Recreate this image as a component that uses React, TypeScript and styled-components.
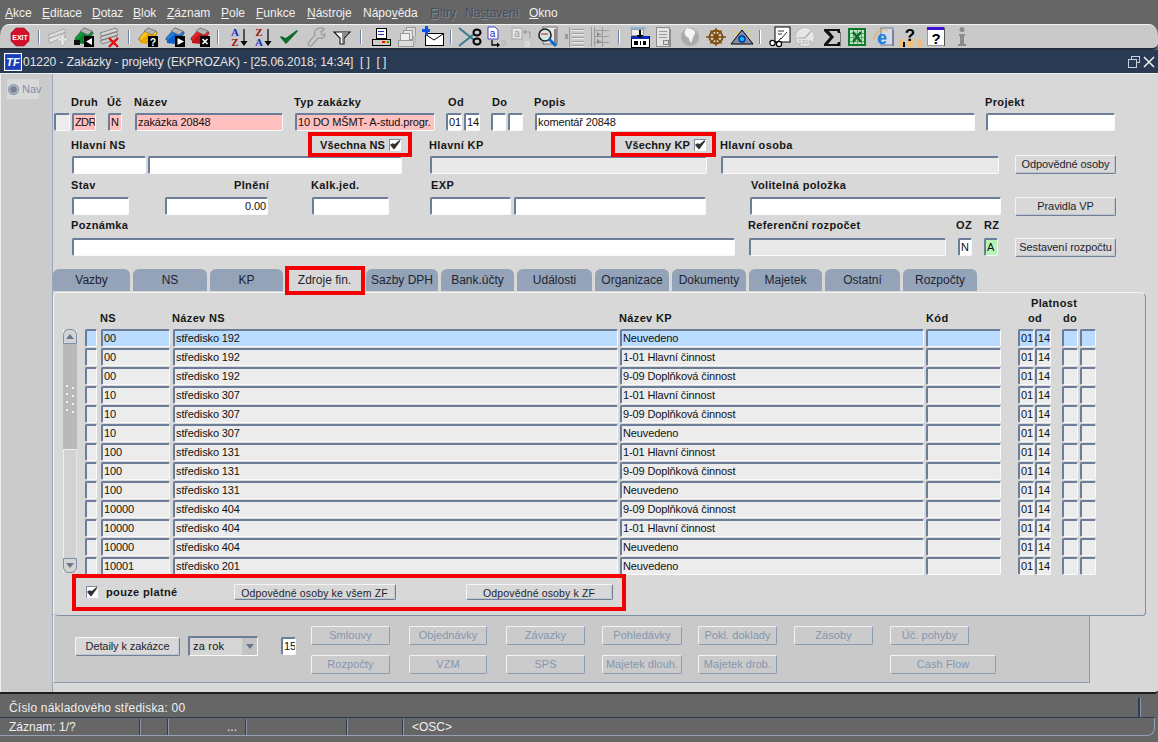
import React from "react";
import styled, { createGlobalStyle } from "styled-components";

const Global = createGlobalStyle`
  html, body { margin: 0; padding: 0; background: #666; }
  * { box-sizing: border-box; }
  body { font-family: "Liberation Sans", Arial, sans-serif; }
`;

const Shell = styled.div`
  width: 1158px; height: 742px; display: flex; flex-direction: column; overflow: hidden;
  background: #666; font-size: 11px; color: #111;
`;

const MenuBar = styled.div`
  height: 24px; display: flex; align-items: center; padding: 1px 0 0 5px; background: #666;
  font-size: 12px; color: #eee;
`;
const MenuItem = styled.span<{ $w: number; $off?: boolean }>`
  width: ${(p) => p.$w}px; white-space: nowrap; flex: none;
  color: ${(p) => (p.$off ? "#3f4e62" : "#f0f0f0")};
  text-shadow: ${(p) => (p.$off ? "1px 1px 0 #8b8b8b" : "none")};
`;

const ToolBar = styled.div`
  height: 26px; display: flex; align-items: center; background: #c9c9c9; position: relative;
  border-top: 1px solid #f2f2f2; border-bottom: 2px solid #222c3d;
  border-radius: 9px 9px 6px 0 / 12px 12px 6px 0; padding-top: 1px;
`;
const ToolSlot = styled.div<{ $ml: number; $w: number }>`
  margin-left: ${(p) => p.$ml}px; width: ${(p) => p.$w}px; height: 22px; flex: none;
  display: flex; align-items: center; justify-content: center;
  svg { display: block; }
`;
const ToolSep = styled.i`
  display: block; width: 2px; height: 14px; background: #6d84a8; border-right: 1px solid #fff;
`;

const TitleBar = styled.div`
  height: 23px; display: flex; align-items: center; background: #2a3a52; color: #e4e4e4;
  font-size: 12px; padding: 0 3px 0 4px; letter-spacing: -0.03px;
`;
const Logo = styled.div`
  width: 18px; height: 18px; flex: none; border: 2px solid #fff; outline: 1px solid #2f4fd0; outline-offset: -2px;
  background: #1c3fb8; color: #fff; font: italic bold 11px/14px "Liberation Sans", sans-serif;
  text-align: center; margin-right: 1px;
`;
const TitleText = styled.span` flex: 1; white-space: pre; `;
const WinIcons = styled.div` display: flex; gap: 3px; align-items: center; `;

const Workspace = styled.div`
  height: 621px; display: flex; background: #d8d8d8; border-bottom: 2px solid #1d1d1d;
  border-top: 1px solid #ededed; border-bottom-right-radius: 4px;
`;
const NavStrip = styled.div`
  width: 53px; flex: none; background: #cbcbcb; padding: 5px 0 0 6px;
  border-left: 1px solid #eee; border-right: 1px solid #9aa8bc;
`;
const NavTab = styled.div`
  width: 32px; height: 20px; background: #d9d9d9; display: flex; align-items: center; gap: 4px; padding-left: 2px;
  color: #7f90a8; font-size: 11px;
`;
const NavRadio = styled.i`
  display: block; width: 9px; height: 9px; flex: none; border-radius: 50%; background: #76828f; border: 1px solid #c3c9d2;
  box-shadow: 0 0 0 1px #8a97a8;
`;

const Main = styled.div` width: 1105px; flex: none; padding-top: 21px; display: flex; flex-direction: column; `;

const LabelRow = styled.div<{ $mt: number }>`
  display: flex; height: 14px; align-items: center; margin-top: ${(p) => p.$mt}px; padding-left: 18px;
`;
const Label = styled.div<{ $w?: number }>`
  ${(p) => (p.$w ? `width: ${p.$w}px; flex: none;` : "")}
  font-weight: bold; font-size: 11px; letter-spacing: 0.36px; color: #161616; white-space: nowrap; line-height: 14px;
`;
const CheckLabel = styled(Label)` letter-spacing: 0.14px; `;
const CheckCell = styled.div<{ $w: number }>`
  width: ${(p) => p.$w}px; flex: none; position: relative; display: flex; align-items: center; gap: 4px;
`;
const RedMark = styled.div`
  position: absolute; border: 4px solid #f50000; pointer-events: none; z-index: 3;
`;
const RedNS = styled(RedMark)` left: -12px; top: -6px; width: 104px; height: 25px; `;
const RedKP = styled(RedMark)` left: -14px; top: -6px; width: 105px; height: 25px; `;
const RedTab = styled(RedMark)` left: -1px; top: -4px; width: 80px; height: 29px; `;
const RedBar = styled(RedMark)` left: 18px; top: -10px; width: 554px; height: 37px; `;

const Check = styled.span`
  width: 12px; height: 12px; flex: none; display: flex; background: #fff;
  border-top: 1px solid #7d8ca3; border-left: 1px solid #7d8ca3;
  svg { display: block; }
`;
const BarCheck = styled(Check)` margin-top: 2px; `;

const FieldRow = styled.div<{ $mt: number }>`
  display: flex; align-items: flex-start; margin-top: ${(p) => p.$mt}px;
`;
const Field = styled.div<{ $w: number; $ml: number; $bg?: string; $right?: boolean; $tight?: boolean }>`
  width: ${(p) => p.$w}px; margin-left: ${(p) => p.$ml}px; height: 18px; flex: none;
  background: ${(p) => p.$bg || "#fff"}; overflow: hidden; white-space: nowrap;
  border-style: solid; border-width: 2px 1px 1px 2px; border-color: #6c7d99 #fafafa #fafafa #6c7d99;
  border-radius: 2px; font-size: 11px; letter-spacing: ${(p) => (p.$tight ? "-0.6px" : "-0.12px")};
  line-height: 15px; padding: 0 1px; color: #111;
  text-align: ${(p) => (p.$right ? "right" : "left")};
`;
const Btn = styled.div<{ $w: number; $ml: number }>`
  width: ${(p) => p.$w}px; margin-left: ${(p) => p.$ml}px; height: 19px; flex: none;
  background: #d8d8d8; color: #1c2430; font-size: 11px; text-align: center; overflow: hidden; white-space: nowrap;
  line-height: 17px; border-radius: 2px; border: 1px solid; letter-spacing: -0.1px;
  border-color: #f4f4f4 #6f7f98 #6f7f98 #f4f4f4; box-shadow: inset -1px -1px 0 #c0c6cf;
`;
const OffsetBtn = styled(Btn)` margin-top: -1px; `;
const ClippedBtn = styled(Btn)`
  height: 16px; font-size: 10.5px; letter-spacing: 0.14px; line-height: 17px;
`;
const OffBtn = styled.div<{ $w: number; $ml: number }>`
  width: ${(p) => p.$w}px; margin-left: ${(p) => p.$ml}px; height: 19px; flex: none; background: #cbcbcb;
  color: #8596af; font-size: 11px; letter-spacing: 0.05px; text-align: center; line-height: 17px; white-space: nowrap; overflow: hidden;
  border: 1px solid; border-color: #f2f2f2 #8b9bb3 #8b9bb3 #f2f2f2; border-radius: 2px;
`;

const Tabs = styled.div` display: flex; gap: 3px; margin-top: 12px; height: 23px; position: relative; z-index: 2; `;
const Tab = styled.div<{ $w: number; $on?: boolean }>`
  width: ${(p) => p.$w}px; flex: none; height: ${(p) => (p.$on ? 25 : 22)}px; position: relative;
  background: ${(p) => (p.$on ? "#d8d8d8" : "#94a3b8")}; border-radius: 6px 6px 0 0;
  color: #1d2531; font-size: 12px; text-align: center; line-height: 21px; white-space: nowrap;
  border-top: 1px solid ${(p) => (p.$on ? "#f2f2f2" : "#94a3b8")};
`;

const Panel = styled.div`
  width: 1093px; height: 324px; flex: none; background: #d8d8d8; padding-top: 3px; position: relative;
  border: 1px solid; border-color: #f4f4f4 #7f8fa8 #7f8fa8 #f4f4f4; border-radius: 5px 6px 4px 5px;
`;
const PlatnostRow = styled.div` display: flex; height: 14px; padding-left: 977px; align-items: center; `;
const HeadRow = styled.div` display: flex; height: 15px; align-items: center; padding-left: 46px; margin-bottom: 4px; `;
const TableBody = styled.div` display: flex; align-items: flex-start; `;
const Scroll = styled.div`
  width: 14px; height: 244px; margin-left: 9px; flex: none; background: #cfcfcf; display: flex; flex-direction: column;
  border-left: 1px solid #f0f0f0; border-right: 1px solid #e6e6e6;
`;
const ScrollBtn = styled.div<{ $down?: boolean }>`
  height: 15px; flex: none; background: #d4d4d4; display: flex; align-items: center; justify-content: center;
  border: 1px solid #8090a8; margin: 0 -1px;
  border-radius: ${(p) => (p.$down ? "0 0 6px 6px" : "6px 6px 0 0")};
  &::after {
    content: ""; width: 0; height: 0; border-left: 4px solid transparent; border-right: 4px solid transparent;
    ${(p) => (p.$down ? "border-top: 5px solid #66778f;" : "border-bottom: 5px solid #66778f;")}
  }
`;
const Thumb = styled.div`
  height: 106px; flex: none; background: #b9b9b9; margin: 0 -1px; display: flex; align-items: center; justify-content: center;
  padding-top: 2px; border-bottom: 1px solid #f0f0f0;
`;
const Dots = styled.div`
  width: 9px; display: grid; grid-template-columns: 2px 2px; column-gap: 4px; row-gap: 6px;
  i { display: block; height: 2px; background: #eee; }
  i:nth-child(even) { transform: translate(0, 2px); }
`;
const ScrollRest = styled.div` flex: 1; background: #d2d2d2; `;
const Rows = styled.div` margin-left: 8px; display: flex; flex-direction: column; gap: 1px; `;
const Row = styled.div` display: flex; height: 18px; `;
const Cell = styled(Field)`
  background: ${(p) => p.$bg || "#ececec"};
`;

const BottomBar = styled.div`
  position: relative; display: flex; align-items: flex-start; margin-top: 9px; height: 16px; padding-left: 32px;
`;
const OnlyLabel = styled(Label)` margin-left: 8px; margin-top: 1px; line-height: 14px; `;

const Lower = styled.div`
  width: 1037px; height: 67px; flex: none; background: #c9c9c9; display: flex; align-items: flex-start; padding-top: 10px;
  border-left: 1px solid #f0f0f0; border-right: 1px solid #8b9bb3; border-bottom: 1px solid #8b9bb3;
`;
const LowerLeft = styled.div` display: flex; align-items: flex-start; margin-top: 11px; flex: none; `;
const SelectBox = styled.div`
  margin-left: 8px; width: 70px; height: 20px; flex: none; display: flex; background: #d6d6d6; font-size: 11px;
  border-style: solid; border-width: 2px 1px 1px 2px; border-color: #6c7d99 #fafafa #fafafa #6c7d99; margin-top: -1px;
`;
const SelectText = styled.span` flex: 1; padding-left: 3px; line-height: 16px; letter-spacing: .2px; `;
const SelectArrow = styled.span`
  width: 15px; background: #c4c4c4; display: flex; align-items: center; justify-content: center;
  &::after { content: ""; border-left: 4px solid transparent; border-right: 4px solid transparent; border-top: 5px solid #66778f; }
`;
const OffGrid = styled.div` display: flex; flex-direction: column; gap: 10px; margin-left: 15px; `;
const OffRow = styled.div` display: flex; `;

const Footer = styled.div`
  flex: 1; background: #666; color: #efefef; font-size: 12px; position: relative; padding-top: 2px;
`;
const FootTop = styled.div`
  height: 22px; display: flex; align-items: center; padding: 3px 0 0 9px; margin-right: 3px; position: relative;
  border-bottom: 1px solid #2f3d52; letter-spacing: 0.2px;
  &::after { content: ""; position: absolute; right: 14px; top: 2px; bottom: 0; width: 2px; background: #2f3d52; border-right: 1px solid #8b97a8; }
`;
const FootBottom = styled.div`
  height: 18px; display: flex; align-items: center; margin-right: 3px; border-bottom: 1px solid #96a2b2;
  border-right: 1px solid #96a2b2; border-bottom-right-radius: 8px;
`;
const FootCell = styled.div<{ $w: number; $pad?: number; $right?: boolean }>`
  width: ${(p) => p.$w}px; height: 16px; flex: none; line-height: 16px; padding-left: ${(p) => p.$pad ?? 0}px;
  border-right: 1px solid #2f3d52; box-shadow: 1px 0 0 #8b97a8; white-space: nowrap;
  text-align: ${(p) => (p.$right ? "right" : "left")}; padding-right: ${(p) => (p.$right ? 8 : 0)}px;
`;
const FootLast = styled.div` padding-left: 9px; `;

/* ---------- icons ---------- */
const Svg: React.FC<{ children: React.ReactNode; w?: number; h?: number }> = ({ children, w = 22, h = 22 }) => (
  <svg width={w} height={h} viewBox={`0 0 ${w} ${h}`} shapeRendering="crispEdges">{children}</svg>
);
const Smooth: React.FC<{ children: React.ReactNode; w?: number; h?: number }> = ({ children, w = 22, h = 22 }) => (
  <svg width={w} height={h} viewBox={`0 0 ${w} ${h}`}>{children}</svg>
);

const Exit = () => (
  <Smooth w={20} h={20}>
    <polygon points="6,1 14,1 19,6 19,14 14,19 6,19 1,14 1,6" fill="#d3112a" stroke="#8e1020" strokeWidth=".6" />
    <text x="10" y="12.5" textAnchor="middle" fontSize="7" fontWeight="bold" fill="#fff" fontFamily="Liberation Sans">EXIT</text>
  </Smooth>
);
const Pile: React.FC<{ c: string; c2: string }> = ({ c, c2 }) => (
  <g>
    <polygon points="2,12 11,2 20,6 20,8 12,16 2,14" fill={c} stroke="#333" strokeWidth=".5" />
    <polygon points="3,15 12,7 18,9 11,18 3,17" fill={c2} />
    <polygon points="7,5 11,2 19,5 15,9" fill="#b5b5b5" stroke="#555" strokeWidth=".5" />
  </g>
);
const Badge: React.FC<{ g: React.ReactNode }> = ({ g }) => (
  <g>
    <rect x="11" y="10" width="10" height="11" fill="#000" />
    {g}
  </g>
);
const Add = () => (
  <Smooth>
    <polygon points="2,9 18,3 20,6 4,12" fill="#dcdcdc" stroke="#a8a8a8" />
    <polygon points="2,13 18,7 20,10 4,17" fill="#e2e2e2" stroke="#a8a8a8" />
    <rect x="12" y="12" width="9" height="3" fill="#efefef" stroke="#aaa" strokeWidth=".5" />
    <rect x="15" y="9" width="3" height="10" fill="#efefef" stroke="#aaa" strokeWidth=".5" />
  </Smooth>
);
const Back = () => (
  <Smooth>
    <Pile c="#0a9a3a" c2="#0b7c2d" />
    <rect x="1" y="14" width="6" height="5" fill="#111" />
    <Badge g={<polygon points="19,12 19,19 13,15.5" fill="#fff" />} />
  </Smooth>
);
const Del = () => (
  <Smooth>
    <polygon points="2,7 18,2 20,5 4,10" fill="#d6d6d6" stroke="#666" strokeWidth=".7" />
    <polygon points="2,11 18,6 20,9 4,14" fill="#cfcfcf" stroke="#666" strokeWidth=".7" />
    <polygon points="2,15 18,10 20,13 4,18" fill="#cfcfcf" stroke="#666" strokeWidth=".7" />
    <path d="M11 12 L20 21 M20 12 L11 21" stroke="#e01010" strokeWidth="2.4" />
  </Smooth>
);
const Q = () => (
  <Smooth>
    <Pile c="#ffc61a" c2="#eca400" />
    <Badge g={<text x="16" y="19.5" textAnchor="middle" fontSize="10" fontWeight="bold" fill="#fff" fontFamily="Liberation Sans">?</text>} />
  </Smooth>
);
const Run = () => (
  <Smooth>
    <Pile c="#1e7fe0" c2="#0f5fc4" />
    <Badge g={<polygon points="13.5,12 20,15.5 13.5,19" fill="#fff" />} />
  </Smooth>
);
const Cancel = () => (
  <Smooth>
    <Pile c="#e8242a" c2="#c41418" />
    <Badge g={<path d="M13.5 13 L18.5 18 M18.5 13 L13.5 18" stroke="#fff" strokeWidth="1.6" />} />
  </Smooth>
);
const Sort: React.FC<{ top: string; bot: string; ct: string; cb: string }> = ({ top, bot, ct, cb }) => (
  <Smooth>
    <text x="7" y="10" textAnchor="middle" fontSize="11" fontWeight="bold" fill={ct} fontFamily="Liberation Serif">{top}</text>
    <text x="7" y="20" textAnchor="middle" fontSize="11" fontWeight="bold" fill={cb} fontFamily="Liberation Serif">{bot}</text>
    <path d="M16 3 V17" stroke="#000" strokeWidth="1.2" />
    <polygon points="12.5,15 19.5,15 16,20" fill="#000" />
  </Smooth>
);
const CheckMark = () => (
  <Smooth>
    <path d="M3 11 L8 17 L19 5 L8 13 Z" fill="#0c7a2a" stroke="#0c6a24" strokeWidth="1.6" strokeLinejoin="round" />
  </Smooth>
);
const Wrench = () => (
  <Smooth>
    <path d="M12 3 C15 1 19 2 19 3 L16 6 L17 9 L20 8 C20 12 16 13 13 12 L7 19 C5 21 2 19 4 16 L10 9 C9 7 10 4 12 3 Z" fill="none" stroke="#9c9c9c" strokeWidth="1.3" />
  </Smooth>
);
const Funnel = () => (
  <Smooth>
    <polygon points="3,6 19,6 13,12 13,18 9,18 9,12" fill="#fff" stroke="#111" strokeWidth="1.1" />
    <polygon points="11,7 18,7 12,12 12,17 11,17" fill="#8d8d8d" />
  </Smooth>
);
const Printer = () => (
  <Svg>
    <rect x="6" y="2" width="10" height="10" fill="#fff" stroke="#000" />
    <rect x="8" y="5" width="6" height="1" fill="#1d2fc0" />
    <rect x="8" y="8" width="6" height="1" fill="#1d2fc0" />
    <rect x="2" y="13" width="18" height="6" fill="#ccc" stroke="#000" />
    <rect x="12" y="15" width="3" height="2" fill="#e81010" />
    <rect x="15" y="15" width="2" height="2" fill="#f0c000" />
    <rect x="17" y="15" width="2" height="2" fill="#10a030" />
  </Svg>
);
const Printers = () => (
  <Svg>
    <rect x="10" y="1" width="9" height="9" fill="#ddd" stroke="#999" />
    <rect x="7" y="4" width="9" height="9" fill="#e6e6e6" stroke="#999" />
    <rect x="4" y="7" width="9" height="7" fill="#efefef" stroke="#999" />
    <rect x="2" y="14" width="15" height="6" fill="#dcdcdc" stroke="#999" />
    <rect x="17" y="10" width="3" height="7" fill="#bbb" />
  </Svg>
);
const Mail = () => (
  <Svg>
    <rect x="3" y="7" width="18" height="12" fill="#fff" stroke="#000" />
    <path d="M3 8 L12 14 L21 8" stroke="#000" fill="none" shapeRendering="auto" />
    <rect x="0" y="3" width="8" height="3" fill="#0a52e8" />
    <rect x="3" y="0" width="3" height="9" fill="#0a52e8" />
  </Svg>
);
const Scissors = () => (
  <Smooth w={24}>
    <path d="M1 2 L16 14" stroke="#3a7c8c" strokeWidth="2" />
    <path d="M1 20 L16 8" stroke="#3a7c8c" strokeWidth="2" />
    <ellipse cx="19" cy="6.5" rx="3.5" ry="3" fill="none" stroke="#000" strokeWidth="2" />
    <ellipse cx="19" cy="15.5" rx="3.5" ry="3" fill="none" stroke="#000" strokeWidth="2" />
  </Smooth>
);
const CopyIcon = () => (
  <Smooth>
    <polygon points="3,1 10,1 13,4 13,13 3,13" fill="#fff" stroke="#1c1cc8" strokeWidth=".8" />
    <text x="7.5" y="11" textAnchor="middle" fontSize="10" fill="#1c1cc8" fontFamily="Liberation Sans">a</text>
    <path d="M7 14 V19 H13" stroke="#000" strokeWidth="1.3" fill="none" />
    <polygon points="12,16.5 12,21.5 15,19" fill="#000" />
    <text x="18.5" y="20" textAnchor="middle" fontSize="10" fill="#b5b5b5" fontFamily="Liberation Sans">a</text>
  </Smooth>
);
const PasteIcon = () => (
  <Smooth>
    <rect x="2" y="2" width="10" height="11" fill="#e4e4e4" stroke="#aaa" />
    <text x="7" y="11" textAnchor="middle" fontSize="10" fill="#999" fontFamily="Liberation Sans">a</text>
    <path d="M14 6 H20 V12" stroke="#999" fill="none" />
    <polygon points="13,6 16,3.5 16,8.5" fill="#999" />
    <text x="17" y="21" textAnchor="middle" fontSize="10" fill="#e8e8e8" fontFamily="Liberation Sans">a</text>
  </Smooth>
);
const FindIcon = () => (
  <Smooth w={24}>
    <rect x="7" y="1" width="14" height="17" fill="#e8e8e8" stroke="#777" />
    <rect x="18" y="3" width="3" height="16" fill="#888" />
    <circle cx="9" cy="9" r="6" fill="#cfe7e7" stroke="#222" strokeWidth="1.6" />
    <rect x="5" y="7" width="7" height="2" fill="#d08070" />
    <path d="M13 13 L20 20" stroke="#0b69d6" strokeWidth="3" />
  </Smooth>
);
const Indent = () => (
  <Svg>
    <rect x="2" y="8" width="3" height="5" fill="#9a9a9a" />
    <rect x="6" y="1" width="1" height="20" fill="#9a9a9a" />
    {[3, 7, 11, 15, 19].map((y) => <rect key={y} x="9" y={y} width="12" height="1" fill="#9a9a9a" />)}
    {[4, 8, 12, 16, 20].map((y) => <rect key={y} x="9" y={y} width="12" height="1" fill="#eee" />)}
  </Svg>
);
const Outdent = () => (
  <Svg>
    <rect x="2" y="1" width="1" height="20" fill="#9a9a9a" />
    <rect x="5" y="1" width="1" height="20" fill="#9a9a9a" />
    <rect x="13" y="1" width="1" height="20" fill="#9a9a9a" />
    {[4, 10, 16].map((y) => <rect key={y} x="6" y={y} width="14" height="1" fill="#9a9a9a" />)}
    <polygon points="8,6 12,8.5 8,11" fill="#8a8a8a" />
    <polygon points="8,13 12,15.5 8,18" fill="#8a8a8a" />
  </Svg>
);
const ImportIcon = () => (
  <Svg>
    <rect x="2" y="1" width="16" height="2" fill="#86b8d8" />
    <rect x="3" y="3" width="12" height="6" fill="#eee" stroke="#999" />
    <rect x="3" y="10" width="18" height="11" fill="#fff" stroke="#000" />
    <rect x="3" y="10" width="18" height="3" fill="#0a2db8" />
    <rect x="6" y="15" width="4" height="4" fill="#000" />
    <rect x="12" y="15" width="1" height="4" fill="#000" />
    <rect x="15" y="15" width="3" height="4" fill="#000" />
    <rect x="11" y="4" width="2" height="6" fill="#000" />
    <polygon points="9,9 15,9 12,13" fill="#000" />
  </Svg>
);
const DocIcon = () => (
  <Svg>
    <rect x="4" y="1" width="13" height="19" fill="#e3e3e3" stroke="#8d8d8d" />
    <rect x="17" y="3" width="2" height="18" fill="#8d8d8d" />
    {[5, 8, 11].map((y) => <rect key={y} x="7" y={y} width="8" height="1" fill="#999" />)}
    <rect x="11" y="14" width="5" height="4" fill="#ddd" stroke="#888" />
  </Svg>
);
const Globe = () => (
  <Smooth>
    <circle cx="11" cy="11" r="9" fill="#ababab" stroke="#b8b8b8" />
    <path d="M8 2 C13 3 17 4 16 8 C14 10 14 13 12 17 C10 15 11 12 8 11 C6 9 4 7 8 2 Z" fill="#f4f4f4" />
  </Smooth>
);
const Wheel = () => (
  <Smooth>
    <circle cx="11" cy="11" r="6.5" fill="none" stroke="#7c4a08" strokeWidth="1.8" />
    <circle cx="11" cy="11" r="2" fill="none" stroke="#7c4a08" strokeWidth="1.4" />
    <path d="M1 11 H21 M11 2 V20 M5.5 4.5 L16.5 17.5 M16.5 4.5 L5.5 17.5" stroke="#7c4a08" strokeWidth="1.4" />
  </Smooth>
);
const Pyramid = () => (
  <Smooth w={24}>
    <polygon points="12,4 23,18 1,18" fill="#7d8fa8" stroke="#000" />
    <circle cx="12" cy="13" r="3" fill="#0bb4ff" stroke="#062ea0" strokeWidth="1.4" />
    <path d="M4 4 L7 7 M12 0 V3 M20 4 L17 7 M2 9 L4 10 M22 9 L20 10" stroke="#e8d000" strokeWidth="1" />
  </Smooth>
);
const Glasses = () => (
  <Smooth>
    <rect x="6" y="1" width="15" height="15" fill="#fff" stroke="#000" />
    <path d="M9 5 H15 M9 8 H13 M12 13 L18 6" stroke="#333" />
    <circle cx="3.5" cy="17" r="2.6" fill="#fff" stroke="#000" strokeWidth="1.2" />
    <circle cx="10" cy="18" r="2.6" fill="#fff" stroke="#000" strokeWidth="1.2" />
    <path d="M6 16 L8 17 L12 12" stroke="#000" fill="none" />
  </Smooth>
);
const Clock = () => (
  <Smooth>
    <circle cx="11" cy="11" r="9.5" fill="#e6e6e6" stroke="#bdbdbd" />
    <path d="M3 12 H11 L17 5" stroke="#aaa" fill="none" strokeWidth="1.2" />
    <text x="11" y="18" textAnchor="middle" fontSize="6" fill="#aaa" fontFamily="Liberation Sans">1314</text>
  </Smooth>
);
const Sigma = () => (
  <Smooth>
    <path d="M3 3 H19 V7 H17 L16 5 H8 L13 11 L7 18 H16 L17 16 H19 V20 H3 V18 L9 11 L3 5 Z" fill="#111" />
    <path d="M19.5 6 V20.5" stroke="#777" />
  </Smooth>
);
const Excel = () => (
  <Svg>
    <rect x="2" y="2" width="18" height="18" fill="#0d7a2e" />
    <rect x="4" y="4" width="14" height="14" fill="#bfe4c4" />
    {[7, 11, 15].map((x) => <rect key={x} x={x} y="4" width="1" height="14" fill="#5aa76e" />)}
    {[7, 11, 15].map((y) => <rect key={y} x="4" y={y} width="14" height="1" fill="#5aa76e" />)}
    <path d="M7 6 L15 16 M15 6 L7 16" stroke="#0a6a26" strokeWidth="2.4" shapeRendering="auto" />
  </Svg>
);
const IE = () => (
  <Smooth>
    <rect x="8" y="2" width="12" height="17" fill="#d5d9e8" stroke="#6f7f9c" />
    <rect x="19" y="4" width="2" height="16" fill="#77849c" />
    <text x="9" y="18" textAnchor="middle" fontSize="18" fontWeight="bold" fontFamily="Liberation Sans" fill="#1b7fe2">e</text>
    <path d="M1 13 C2 5 12 2 15 5" stroke="#f0b030" fill="none" />
  </Smooth>
);
const People = () => (
  <Smooth w={24}>
    <rect x="1" y="13" width="5" height="8" fill="#f2bf70" />
    <rect x="10" y="13" width="5" height="8" fill="#f2bf70" />
    <rect x="19" y="13" width="5" height="8" fill="#f2bf70" />
    <rect x="5" y="16" width="2" height="5" fill="#000" />
    <text x="12" y="15" textAnchor="middle" fontSize="17" fontWeight="bold" fontFamily="Liberation Sans" fill="#000">?</text>
  </Smooth>
);
const HelpWin = () => (
  <Svg>
    <rect x="2" y="1" width="17" height="18" fill="#fff" stroke="#999" />
    <rect x="2" y="1" width="17" height="3" fill="#3a10d8" />
    <rect x="19" y="2" width="1" height="18" fill="#555" />
    <text x="11" y="18" textAnchor="middle" fontSize="15" fontWeight="bold" fontFamily="Liberation Sans" fill="#000">?</text>
  </Svg>
);
const Info = () => (
  <Svg>
    <circle cx="11" cy="3.5" r="2.5" fill="#8b8b8b" shapeRendering="auto" />
    <rect x="8" y="8" width="6" height="2" fill="#8b8b8b" />
    <rect x="9" y="9" width="4" height="9" fill="#8b8b8b" />
    <rect x="7" y="18" width="8" height="2" fill="#8b8b8b" />
  </Svg>
);

type ToolItem = { c: number; n?: React.ReactNode };
const tools: ToolItem[] = [
  { c: 20, n: <Exit /> }, { c: 39 }, { c: 57, n: <Add /> }, { c: 84, n: <Back /> }, { c: 109, n: <Del /> }, { c: 129 },
  { c: 148, n: <Q /> }, { c: 175, n: <Run /> }, { c: 200, n: <Cancel /> }, { c: 218 },
  { c: 239, n: <Sort top="A" bot="Z" ct="#1a2ec0" cb="#a01010" /> }, { c: 263, n: <Sort top="Z" bot="A" ct="#a01010" cb="#1a2ec0" /> },
  { c: 289, n: <CheckMark /> }, { c: 316, n: <Wrench /> }, { c: 342, n: <Funnel /> }, { c: 361 },
  { c: 381, n: <Printer /> }, { c: 407, n: <Printers /> }, { c: 433, n: <Mail /> }, { c: 451 },
  { c: 470, n: <Scissors /> }, { c: 496, n: <CopyIcon /> }, { c: 521, n: <PasteIcon /> }, { c: 548, n: <FindIcon /> },
  { c: 574, n: <Indent /> }, { c: 600, n: <Outdent /> }, { c: 619 },
  { c: 639, n: <ImportIcon /> }, { c: 663, n: <DocIcon /> }, { c: 690, n: <Globe /> }, { c: 716, n: <Wheel /> }, { c: 742, n: <Pyramid /> }, { c: 760 },
  { c: 780, n: <Glasses /> }, { c: 805, n: <Clock /> }, { c: 832, n: <Sigma /> }, { c: 857, n: <Excel /> },
  { c: 884, n: <IE /> }, { c: 910, n: <People /> }, { c: 936, n: <HelpWin /> }, { c: 962, n: <Info /> },
];

const menus: [React.ReactNode, number, boolean?][] = [
  [<><u>A</u>kce</>, 37], [<><u>E</u>ditace</>, 50], [<><u>D</u>otaz</>, 41], [<><u>B</u>lok</>, 34], [<><u>Z</u>áznam</>, 54],
  [<><u>P</u>ole</>, 35], [<><u>F</u>unkce</>, 51], [<><u>N</u>ástroje</>, 56], [<>Nápo<u>v</u>ěda</>, 67], [<><u>F</u>iltry</>, 35, true],
  [<>Na<u>s</u>tavení</>, 64, true], [<><u>O</u>kno</>, 40],
];

const tabs: [string, number][] = [
  ["Vazby", 77], ["NS", 74], ["KP", 73], ["Zdroje fin.", 77], ["Sazby DPH", 72], ["Bank.účty", 73], ["Události", 75],
  ["Organizace", 74], ["Dokumenty", 74], ["Majetek", 73], ["Ostatní", 75], ["Rozpočty", 74],
];

const rows: [string, string, string][] = [
  ["00", "středisko 192", "Neuvedeno"], ["00", "středisko 192", "1-01 Hlavní činnost"], ["00", "středisko 192", "9-09 Doplňková činnost"],
  ["10", "středisko 307", "1-01 Hlavní činnost"], ["10", "středisko 307", "9-09 Doplňková činnost"], ["10", "středisko 307", "Neuvedeno"],
  ["100", "středisko 131", "1-01 Hlavní činnost"], ["100", "středisko 131", "9-09 Doplňková činnost"], ["100", "středisko 131", "Neuvedeno"],
  ["10000", "středisko 404", "9-09 Doplňková činnost"], ["10000", "středisko 404", "1-01 Hlavní činnost"], ["10000", "středisko 404", "Neuvedeno"],
  ["10001", "středisko 201", "Neuvedeno"],
];

const Tick = () => (
  <svg width="11" height="11" viewBox="0 0 11 11">
    <path d="M1 5 L4 8.5 L9.5 1 L4.5 5 L3 4 Z" fill="#333" stroke="#333" strokeWidth="1.4" strokeLinejoin="round" />
  </svg>
);

export default function App() {
  const selected = "#b9dcff";
  return (
    <Shell>
      <Global />
      <MenuBar>
        {menus.map(([t, w, off], i) => <MenuItem key={i} $w={w} $off={off}>{t}</MenuItem>)}
      </MenuBar>
      <ToolBar>
        {tools.map((t, i) => {
          const w = t.n ? 24 : 2;
          const prev = i ? tools[i - 1] : null;
          const prevEnd = prev ? prev.c + (prev.n ? 12 : 1) : 0;
          const ml = t.c - w / 2 - prevEnd;
          return <ToolSlot key={i} $ml={ml} $w={w}>{t.n ?? <ToolSep />}</ToolSlot>;
        })}
      </ToolBar>
      <TitleBar>
        <Logo>TF</Logo>
        <TitleText>01220 - Zakázky - projekty (EKPROZAK) - [25.06.2018; 14:34]  [ ]  [ ]</TitleText>
        <WinIcons>
          <svg width="12" height="12" viewBox="0 0 12 12" shapeRendering="crispEdges">
            <path d="M3.5 3.5 V0.5 H11.5 V6.5 H8.5 M0.5 3.5 H8.5 V11.5 H0.5 Z" fill="none" stroke="#c9d0da" />
          </svg>
          <svg width="12" height="12" viewBox="0 0 12 12">
            <path d="M1 1 L11 11 M11 1 L1 11" stroke="#f2f2f2" strokeWidth="1.5" />
          </svg>
        </WinIcons>
      </TitleBar>
      <Workspace>
        <NavStrip>
          <NavTab><NavRadio />Nav</NavTab>
        </NavStrip>
        <Main>
          <LabelRow $mt={0}>
            <Label $w={36}>Druh</Label><Label $w={27}>Úč</Label><Label $w={160}>Název</Label><Label $w={154}>Typ zakázky</Label>
            <Label $w={44}>Od</Label><Label $w={42}>Do</Label><Label $w={451}>Popis</Label><Label>Projekt</Label>
          </LabelRow>
          <FieldRow $mt={4}>
            <Field $ml={1} $w={16} $bg="#ececec" />
            <Field $ml={2} $w={24} $bg="#ffc0c0" $tight>ZDR</Field>
            <Field $ml={12} $w={14} $bg="#ffc0c0">N</Field>
            <Field $ml={13} $w={148} $bg="#ffc0c0">zakázka 20848</Field>
            <Field $ml={12} $w={140} $bg="#ffc0c0">10 DO MŠMT- A-stud.progr.</Field>
            <Field $ml={11} $w={16}>01</Field>
            <Field $ml={2} $w={16}>14</Field>
            <Field $ml={11} $w={15} />
            <Field $ml={2} $w={15} />
            <Field $ml={12} $w={440}>komentář 20848</Field>
            <Field $ml={11} $w={129} />
          </FieldRow>
          <LabelRow $mt={7}>
            <Label $w={249}>Hlavní NS</Label>
            <CheckCell $w={109}>
              <RedNS />
              <CheckLabel>Všechna NS</CheckLabel><Check><Tick /></Check>
            </CheckCell>
            <Label $w={196}>Hlavní KP</Label>
            <CheckCell $w={95}>
              <RedKP />
              <CheckLabel>Všechny KP</CheckLabel><Check><Tick /></Check>
            </CheckCell>
            <Label>Hlavní osoba</Label>
          </LabelRow>
          <FieldRow $mt={4}>
            <Field $ml={19} $w={74} />
            <Field $ml={2} $w={254} />
            <Field $ml={28} $w={277} $bg="#e9e9e9" />
            <Field $ml={14} $w={278} $bg="#e9e9e9" />
            <OffsetBtn $ml={16} $w={101}>Odpovědné osoby</OffsetBtn>
          </FieldRow>
          <LabelRow $mt={4}>
            <Label $w={163}>Stav</Label><Label $w={77}>Plnění</Label><Label $w={120}>Kalk.jed.</Label>
            <Label $w={320}>EXP</Label><Label>Volitelná položka</Label>
          </LabelRow>
          <FieldRow $mt={5}>
            <Field $ml={19} $w={57} />
            <Field $ml={36} $w={103} $right>0.00</Field>
            <Field $ml={44} $w={77} />
            <Field $ml={41} $w={81} />
            <Field $ml={3} $w={192} />
            <Field $ml={44} $w={251} />
            <Btn $ml={14} $w={101}>Pravidla VP</Btn>
          </FieldRow>
          <LabelRow $mt={2}>
            <Label $w={677}>Poznámka</Label><Label $w={208}>Referenční rozpočet</Label><Label $w={28}>OZ</Label><Label>RZ</Label>
          </LabelRow>
          <FieldRow $mt={6}>
            <Field $ml={19} $w={663} />
            <Field $ml={14} $w={197} $bg="#e9e9e9" />
            <Field $ml={12} $w={14}>N</Field>
            <Field $ml={12} $w={14} $bg="#b8f2b8">A</Field>
            <Btn $ml={17} $w={101}>Sestavení rozpočtu</Btn>
          </FieldRow>
          <Tabs>
            {tabs.map(([t, w]) => (
              <Tab key={t} $w={w} $on={t === "Zdroje fin."}>
                {t}
                {t === "Zdroje fin." && <RedTab />}
              </Tab>
            ))}
          </Tabs>
          <Panel>
            <PlatnostRow><Label>Platnost</Label></PlatnostRow>
            <HeadRow>
              <Label $w={72}>NS</Label><Label $w={447}>Název NS</Label><Label $w={307}>Název KP</Label>
              <Label $w={102}>Kód</Label><Label $w={35}>od</Label><Label>do</Label>
            </HeadRow>
            <TableBody>
              <Scroll>
                <ScrollBtn />
                <Thumb>
                  <Dots>{Array.from({ length: 8 }, (_, i) => <i key={i} />)}</Dots>
                </Thumb>
                <ScrollRest />
                <ScrollBtn $down />
              </Scroll>
              <Rows>
                {rows.map((r, i) => {
                  const bg = i === 0 ? selected : undefined;
                  return (
                    <Row key={i}>
                      <Cell $ml={0} $w={12} $bg={bg} />
                      <Cell $ml={4} $w={69} $bg={bg}>{r[0]}</Cell>
                      <Cell $ml={3} $w={445} $bg={bg}>{r[1]}</Cell>
                      <Cell $ml={2} $w={304} $bg={bg}>{r[2]}</Cell>
                      <Cell $ml={2} $w={75} $bg={bg} />
                      <Cell $ml={17} $w={16} $bg={bg}>01</Cell>
                      <Cell $ml={1} $w={16} $bg={bg}>14</Cell>
                      <Cell $ml={11} $w={16} $bg={bg} />
                      <Cell $ml={2} $w={16} $bg={bg} />
                    </Row>
                  );
                })}
              </Rows>
            </TableBody>
            <BottomBar>
              <RedBar />
              <BarCheck><Tick /></BarCheck>
              <OnlyLabel>pouze platné</OnlyLabel>
              <ClippedBtn $ml={56} $w={162}>Odpovědné osoby ke všem ZF</ClippedBtn>
              <ClippedBtn $ml={70} $w={147}>Odpovědné osoby k ZF</ClippedBtn>
            </BottomBar>
          </Panel>
          <Lower>
            <LowerLeft>
              <Btn $ml={21} $w={105}>Detaily k zakázce</Btn>
              <SelectBox><SelectText>za rok</SelectText><SelectArrow /></SelectBox>
              <Field $ml={23} $w={15}>15</Field>
            </LowerLeft>
            <OffGrid>
              <OffRow>
                <OffBtn $ml={0} $w={79}>Smlouvy</OffBtn>
                <OffBtn $ml={19} $w={78}>Objednávky</OffBtn>
                <OffBtn $ml={19} $w={79}>Závazky</OffBtn>
                <OffBtn $ml={17} $w={80}>Pohledávky</OffBtn>
                <OffBtn $ml={16} $w={79}>Pokl. doklady</OffBtn>
                <OffBtn $ml={17} $w={79}>Zásoby</OffBtn>
                <OffBtn $ml={17} $w={79}>Úč. pohyby</OffBtn>
              </OffRow>
              <OffRow>
                <OffBtn $ml={0} $w={79}>Rozpočty</OffBtn>
                <OffBtn $ml={19} $w={78}>VZM</OffBtn>
                <OffBtn $ml={19} $w={79}>SPS</OffBtn>
                <OffBtn $ml={17} $w={80}>Majetek dlouh.</OffBtn>
                <OffBtn $ml={16} $w={79}>Majetek drob.</OffBtn>
                <OffBtn $ml={113} $w={106}>Cash Flow</OffBtn>
              </OffRow>
            </OffGrid>
          </Lower>
        </Main>
      </Workspace>
      <Footer>
        <FootTop>Číslo nákladového střediska: 00</FootTop>
        <FootBottom>
          <FootCell $w={140} $pad={9}>Záznam: 1/?</FootCell>
          <FootCell $w={28} />
          <FootCell $w={78} $right>...</FootCell>
          <FootCell $w={101} />
          <FootCell $w={56} />
          <FootLast>&lt;OSC&gt;</FootLast>
        </FootBottom>
      </Footer>
    </Shell>
  );
}
